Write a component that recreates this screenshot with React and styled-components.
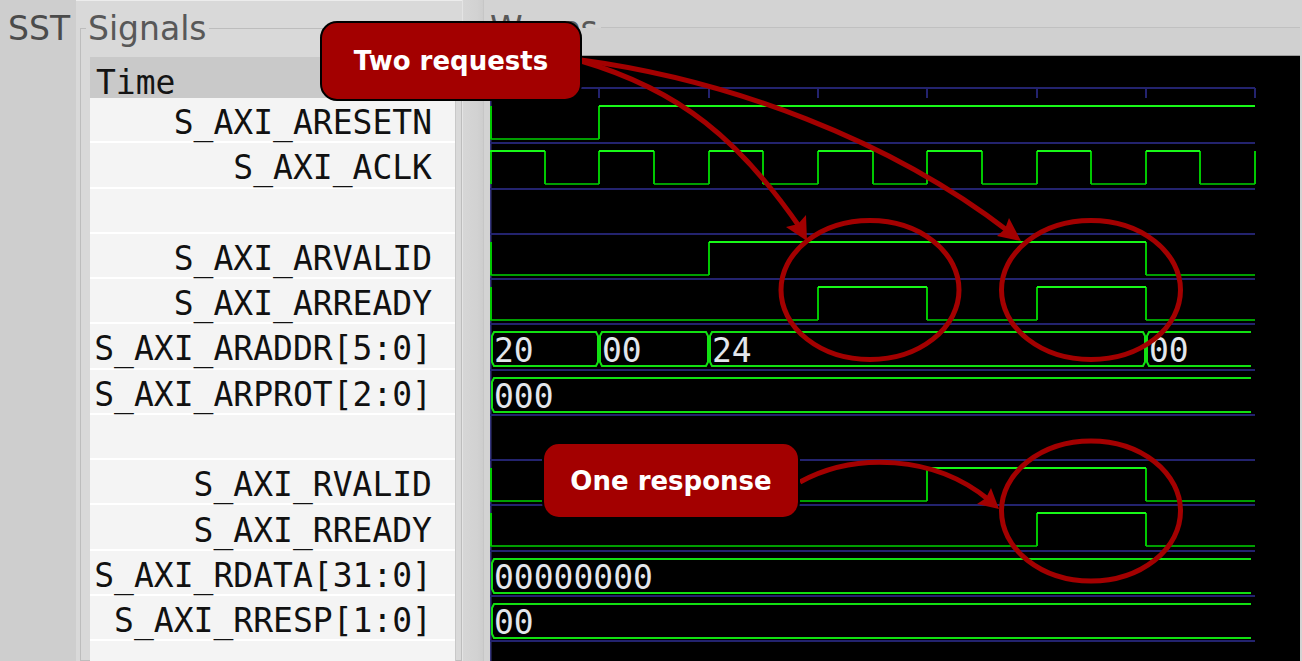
import React from 'react';
import styled, { createGlobalStyle } from 'styled-components';

const ROW_H = 45.27;
const HALF = 54.65;
const WAVE_END = 765;
const BUS_END = 761;
const CANVAS_TOP = 56;
const FIRST_ROW = 98 - CANVAS_TOP;

const signals = [
  { name: 'S_AXI_ARESETN', wave: '00111111111111' },
  { name: 'S_AXI_ACLK', wave: '101010101010101' },
  { name: '' },
  { name: 'S_AXI_ARVALID', wave: '00001111111100' },
  { name: 'S_AXI_ARREADY', wave: '00000011001100' },
  {
    name: 'S_AXI_ARADDR[5:0]',
    segs: [
      [0, 2, '20'],
      [2, 4, '00'],
      [4, 12, '24'],
      [12, 14, '00'],
    ],
  },
  { name: 'S_AXI_ARPROT[2:0]', segs: [[0, 14, '000']] },
  { name: '' },
  { name: 'S_AXI_RVALID', wave: '00000000111100' },
  { name: 'S_AXI_RREADY', wave: '00000000001100' },
  { name: 'S_AXI_RDATA[31:0]', segs: [[0, 14, '00000000']] },
  { name: 'S_AXI_RRESP[1:0]', segs: [[0, 14, '00']] },
];

const GlobalStyle = createGlobalStyle`
  html, body {
    margin: 0;
    padding: 0;
    background: #d9d9d9;
  }
  body {
    width: 1302px;
    height: 661px;
    overflow: hidden;
  }
`;

const bitPaths = (wave, top) => {
  const hi = Math.round(top + 8);
  const lo = Math.round(top + 41);
  let high = '';
  let low = '';
  let edges = `M1 ${hi}V${lo}`;
  for (let i = 0; i < wave.length; i++) {
    const x0 = Math.round(Math.min(i * HALF, WAVE_END));
    const x1 = Math.round(Math.min((i + 1) * HALF, WAVE_END));
    if (i > 0 && wave[i] !== wave[i - 1]) edges += `M${x0} ${hi}V${lo}`;
    if (x1 <= x0) continue;
    if (wave[i] === '1') high += `M${x0} ${hi}H${x1}`;
    else low += `M${x0} ${lo}H${x1}`;
  }
  return { high, low, edges };
};

const busShapes = (segs, top) => {
  const t = Math.round(top + 8);
  const b = Math.round(top + 42);
  return segs.map(([a, z, label]) => {
    const xl = a === 0 ? 2 : Math.round(a * HALF) + 1;
    const open = z >= 14;
    const xr = open ? BUS_END : Math.round(z * HALF) - 1;
    const d = open
      ? `M${xr} ${t}H${xl + 2}L${xl} ${t + 4}V${b - 4}L${xl + 2} ${b}H${xr}`
      : `M${xl + 2} ${t}H${xr - 2}L${xr} ${t + 4}V${b - 4}L${xr - 2} ${b}H${xl + 2}L${xl} ${b - 4}V${t + 4}Z`;
    return { d, label, x: xl + 2, y: b - 4 };
  });
};

const Waveforms = () => (
  <svg width="810" height="605" viewBox="0 0 810 605" style={{ display: 'block' }}>
    <rect x="0" y="0" width="1.5" height="605" fill="#34347c" />
    <g stroke="#23236e" strokeWidth="2" fill="none">
      <path d={`M0 32H${WAVE_END}`} />
      {[1, 2, 3, 4, 5, 6, 7].map((k) => (
        <path key={k} d={`M${Math.round(k * 2 * HALF)} 32V42`} />
      ))}
      {signals.map((s, i) => (
        <path key={i} d={`M0 ${Math.round(FIRST_ROW + (i + 1) * ROW_H)}H${WAVE_END}`} />
      ))}
    </g>
    {signals.map((s, i) => {
      const top = FIRST_ROW + i * ROW_H;
      if (s.wave) {
        const p = bitPaths(s.wave, top);
        return (
          <g key={i} fill="none" strokeWidth="2">
            <path d={p.low} stroke="#009e00" />
            <path d={p.edges} stroke="#00c800" />
            <path d={p.high} stroke="#18f818" />
          </g>
        );
      }
      if (s.segs) {
        return (
          <g key={i}>
            {busShapes(s.segs, top).map((seg, k) => (
              <g key={k}>
                <path d={seg.d} fill="none" stroke="#12e012" strokeWidth="2" />
                <text
                  x={seg.x}
                  y={seg.y}
                  fill="#e2e6ec"
                  fontSize="33"
                  fontFamily='"DejaVu Sans Mono", monospace'
                >
                  {seg.label}
                </text>
              </g>
            ))}
          </g>
        );
      }
      return null;
    })}
  </svg>
);

const Annotations = () => (
  <OverlaySvg width="1302" height="661" viewBox="0 0 1302 661">
    <g fill="none" stroke="#a30000" strokeWidth="5">
      <path d="M581 61 C680 90 740 140 801 229" />
      <path d="M581 60 C730 80 890 140 1008 231" />
      <path d="M800 482 C855 452 935 455 989 500" />
      <ellipse cx="870" cy="290" rx="89" ry="69.5" />
      <ellipse cx="1091" cy="290" rx="89.5" ry="69.5" />
      <ellipse cx="1091" cy="511" rx="89.5" ry="70" />
    </g>
    <g fill="#a30000">
      <polygon points="807,241 786,227 798,224 806,215" />
      <polygon points="1021,241 997,236 1005,229 1009,218" />
      <polygon points="999,509 977,504 986,498 991,488" />
    </g>
  </OverlaySvg>
);

const App = () => (
  <>
    <GlobalStyle />
    <Page>
      <SstColumn>SST</SstColumn>
      <SignalsFrame>
        <FrameLegend>Signals</FrameLegend>
        <SignalList>
          <TimeHeader>Time</TimeHeader>
          {signals.map((s, i) => (
            <SignalRow key={i}>{s.name}</SignalRow>
          ))}
        </SignalList>
      </SignalsFrame>
      <PaneHandle />
      <WavesPane>
        <WavesTitle>
          <TitleLabel>Waves</TitleLabel>
        </WavesTitle>
        <Ruler />
        <Canvas>
          <Waveforms />
        </Canvas>
      </WavesPane>

      <Annotations />
      <Callout $x={320} $y={21} $w={262} $h={80}>
        Two requests
      </Callout>
      <Callout $x={542} $y={442} $w={258} $h={77}>
        One response
      </Callout>
    </Page>
  </>
);

const Page = styled.div`
  position: relative;
  display: flex;
  width: 1302px;
  height: 661px;
  overflow: hidden;
  background: #d9d9d9;
  box-shadow: inset 0 1px 0 #ececec;
`;

const SstColumn = styled.div`
  flex: 0 0 76px;
  box-sizing: border-box;
  padding: 10px 0 0 8px;
  background: #cecece;
  font: 33px/38px 'DejaVu Sans', sans-serif;
  color: #4b4b4b;
`;

const SignalsFrame = styled.fieldset`
  flex: 0 0 auto;
  width: 382px;
  box-sizing: border-box;
  min-width: 0;
  margin: 7px 0 0 4px;
  padding: 7px 5px 0 9px;
  border: 1px solid #bdbdbd;
`;

const FrameLegend = styled.legend`
  margin-left: -4px;
  padding: 3px 2px 2px;
  font: 33px/38px 'DejaVu Sans', sans-serif;
  color: #585858;
`;

const SignalList = styled.div`
  width: 366px;
  height: 620px;
  box-sizing: border-box;
  border-right: 1px solid #c8c8c8;
  background: #f4f4f4;
`;

const TimeHeader = styled.div`
  height: 41px;
  box-sizing: border-box;
  padding: 5px 0 0 6px;
  background: #c9c9c9;
  font: 33px/41px 'DejaVu Sans Mono', monospace;
  color: #141414;
`;

const SignalRow = styled.div`
  height: ${ROW_H}px;
  box-sizing: border-box;
  display: flex;
  align-items: center;
  justify-content: flex-end;
  padding: 6px 23px 0 0;
  border-bottom: 2px solid #ffffff;
  font: 33px 'DejaVu Sans Mono', monospace;
  color: #111;
  white-space: pre;
`;

const PaneHandle = styled.div`
  flex: 0 0 22px;
  box-sizing: border-box;
  border-left: 1px solid #e4e4e4;
  border-right: 1px solid #c6c6c6;
  background: linear-gradient(90deg, #d6d6d6, #d2d2d2 70%, #cdcdcd);
`;

const WavesPane = styled.section`
  flex: 1;
  display: flex;
  flex-direction: column;
  padding: 0 2px 0 6px;
  background: #d3d3d3;
`;

const WavesTitle = styled.div`
  height: 28px;
  box-sizing: border-box;
  padding-top: 10px;
  border-bottom: 1px solid #c0c0c0;
  font: 33px/38px 'DejaVu Sans', sans-serif;
  color: #585858;
  white-space: nowrap;
`;

const TitleLabel = styled.span`
  padding-right: 3px;
  background: #d3d3d3;
`;

const Ruler = styled.div`
  height: 28px;
  box-sizing: border-box;
  border-bottom: 1px solid #9c9c9c;
  background: #d0d0d0;
`;

const Canvas = styled.div`
  flex: 1;
  overflow: hidden;
  background: #000;
`;

const OverlaySvg = styled.svg`
  position: absolute;
  left: 0;
  top: 0;
  pointer-events: none;
`;

const Callout = styled.div`
  position: absolute;
  left: ${(p) => p.$x}px;
  top: ${(p) => p.$y}px;
  width: ${(p) => p.$w}px;
  height: ${(p) => p.$h}px;
  box-sizing: border-box;
  display: flex;
  align-items: center;
  justify-content: center;
  border: 2px solid #000;
  border-radius: 17px;
  background: #a30000;
  color: #fff;
  font: bold 26px 'DejaVu Sans', sans-serif;
  white-space: nowrap;
`;

export default App;
